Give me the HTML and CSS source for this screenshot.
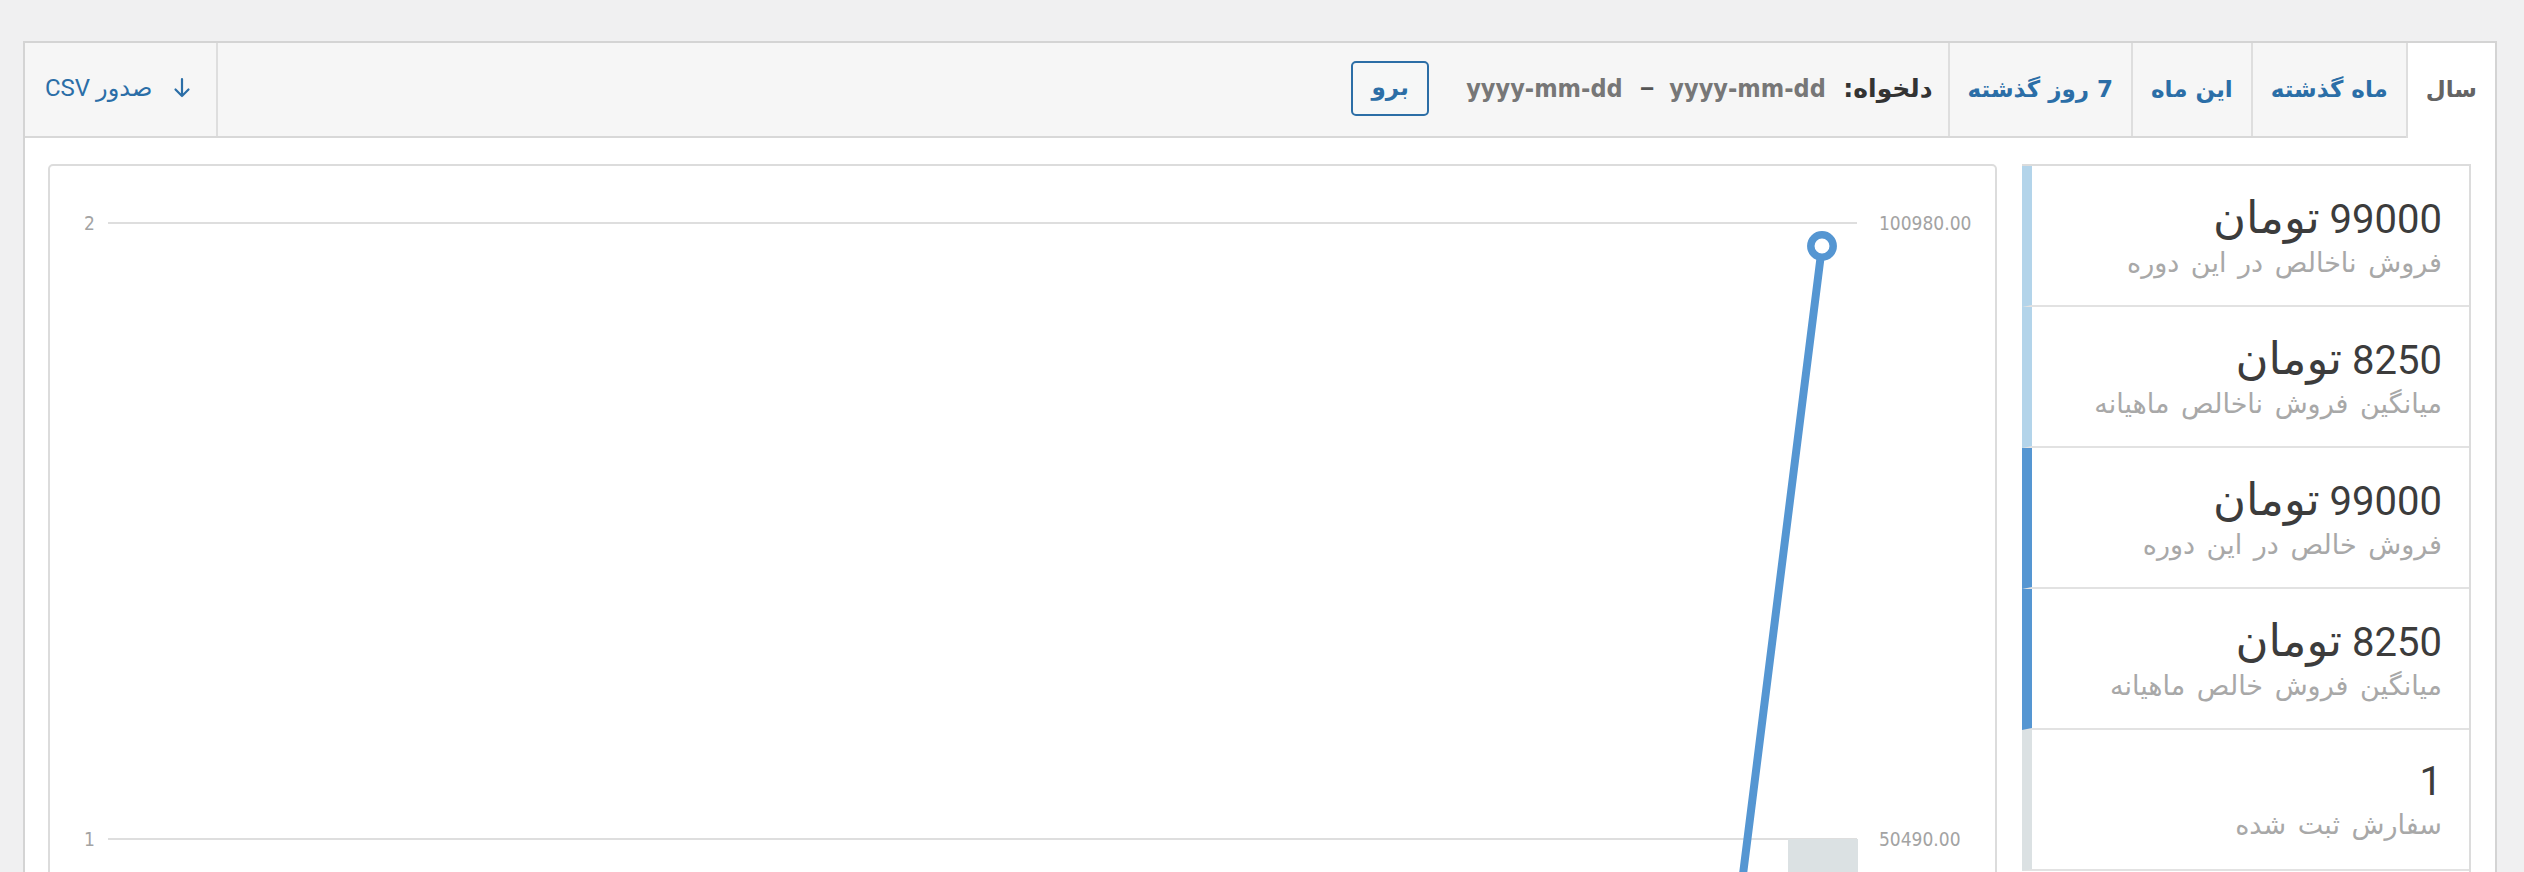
FILE: index.html
```html
<!DOCTYPE html>
<html dir="rtl" lang="fa">
<head>
<meta charset="utf-8">
<title>گزارش فروش</title>
<link rel="stylesheet" href="styles.css">
</head>
<body>
<div class="report">
  <div class="range-bar">
    <ul class="tabs">
      <li class="active">سال</li>
      <li><a href="#">ماه گذشته</a></li>
      <li><a href="#">این ماه</a></li>
      <li><a href="#">7 روز گذشته</a></li>
      <li class="custom">
        <span class="custom-label">دلخواه:</span>
        <form class="range-form">
          <input type="text" class="date" placeholder="yyyy-mm-dd">
          <span class="dash">–</span>
          <input type="text" class="date" placeholder="yyyy-mm-dd">
          <button type="button" class="go">برو</button>
        </form>
      </li>
    </ul>
    <div class="export">
      <a href="#" class="export-link">
        <svg class="arrow" width="18" height="22" viewBox="0 0 18 22"><path d="M9 2 V19 M2.5 12.5 L9 19 L15.5 12.5" fill="none" stroke="currentColor" stroke-width="2.2" stroke-linecap="round" stroke-linejoin="round"/></svg>
        <span>صدور CSV</span>
      </a>
    </div>
  </div>
  <div class="main">
    <ul class="legend">
      <li class="s-light"><strong>99000 <span class="unit">تومان</span></strong><span class="label">فروش ناخالص در این دوره</span></li>
      <li class="s-light"><strong>8250 <span class="unit">تومان</span></strong><span class="label">میانگین فروش ناخالص ماهیانه</span></li>
      <li class="s-blue"><strong>99000 <span class="unit">تومان</span></strong><span class="label">فروش خالص در این دوره</span></li>
      <li class="s-blue"><strong>8250 <span class="unit">تومان</span></strong><span class="label">میانگین فروش خالص ماهیانه</span></li>
      <li class="s-grey"><strong>1</strong><span class="label">سفارش ثبت شده</span></li>
    </ul>
    <div class="chart">
      <svg class="plot" width="1945" height="1300" viewBox="0 0 1945 1300">
        <line class="grid" x1="58" y1="57" x2="1807" y2="57"/>
        <line class="grid" x1="58" y1="673" x2="1807" y2="673"/>
        <text class="axis" x="34" y="57" text-anchor="end" dominant-baseline="central">2</text>
        <text class="axis" x="34" y="673" text-anchor="end" dominant-baseline="central">1</text>
        <text class="axis" x="1829" y="57" text-anchor="start" dominant-baseline="central" direction="ltr">100980.00</text>
        <text class="axis" x="1829" y="673" text-anchor="start" dominant-baseline="central" direction="ltr">50490.00</text>
        <rect class="bar" x="1738" y="673" width="70" height="620"/>
        <line class="series" x1="1772" y1="80" x2="1620" y2="1289"/>
        <circle class="point" cx="1772" cy="80" r="11.2"/>
      </svg>
    </div>
  </div>
</div>
</body>
</html>
```
FILE: styles.css
```css
html, body {
  margin: 0;
  padding: 0;
}
body {
  background: #f0f0f1;
  height: 872px;
  overflow: hidden;
  font-family: Roboto, "DejaVu Sans", sans-serif;
}
.report {
  margin: 41px 27px 0 23px;
  border: 2px solid #d4d4d4;
  border-bottom: none;
  background: #fff;
}
.range-bar {
  display: flex;
  height: 93px;
  background: #f6f6f6;
  border-bottom: 2px solid #d8d8d8;
}
.tabs {
  display: flex;
  list-style: none;
  margin: 0;
  padding: 0;
}
.tabs li {
  display: flex;
  align-items: center;
  padding: 0 18px 2px;
  border-left: 2px solid #dedede;
  font-family: "DejaVu Sans", sans-serif;
  font-weight: bold;
  font-size: 23px;
  color: #2b6ea7;
}
.tabs li a {
  color: #2b6ea7;
  text-decoration: none;
}
.tabs li.active {
  background: #fff;
  color: #646464;
  margin-bottom: -2px;
  padding-bottom: 4px;
}
.tabs li.custom {
  border-left: none;
  padding-right: 15px;
  padding-left: 0;
  color: #333;
  gap: 16px;
}
.custom-label {
  font-size: 25px;
}
.range-form {
  display: flex;
  align-items: center;
  gap: 15px;
  margin: 0;
}
.date {
  width: 158px;
  border: none;
  background: transparent;
  padding: 0;
  margin: 0;
  direction: ltr;
  text-align: left;
  font-family: "DejaVu Sans Condensed", "DejaVu Sans", sans-serif;
  font-weight: bold;
  font-size: 25px;
  color: #777;
  outline: none;
}
.date::placeholder {
  color: #777;
  opacity: 1;
}
.dash {
  color: #555;
  font-family: Roboto, sans-serif;
  font-weight: bold;
  font-size: 24px;
}
.go {
  margin-right: 22px;
  width: 78px;
  height: 55px;
  box-sizing: border-box;
  border: 2px solid #2c6ea6;
  border-radius: 5px;
  background: #f6f7f7;
  color: #2c6ea6;
  font-family: "DejaVu Sans", sans-serif;
  font-weight: bold;
  font-size: 23px;
  padding: 0 0 4px;
}
.export {
  margin-right: auto;
  display: flex;
  align-items: center;
  padding: 0 25px 4px 20px;
  border-right: 2px solid #dedede;
}
.export-link {
  display: flex;
  align-items: center;
  gap: 21px;
  color: #2b6ea7;
  text-decoration: none;
  font-size: 24px;
}
.arrow {
  display: block;
}
.main {
  display: flex;
  gap: 25px;
  padding: 26px 24px 0 23px;
}
.legend {
  list-style: none;
  margin: 0;
  padding: 0;
  width: 449px;
  flex: none;
  box-sizing: border-box;
  border-top: 2px solid #dcdcdc;
  border-right: 2px solid #dcdcdc;
}
.legend li {
  height: 141px;
  box-sizing: border-box;
  padding: 28px 27px 0 0;
  border-bottom: 2px solid #e2e2e2;
  border-left: 10px solid #b3d4ea;
}
.legend li.s-blue {
  border-left-color: #5596d2;
}
.legend li.s-grey {
  border-left-color: #dbe1e3;
}
.legend strong {
  display: block;
  font-weight: normal;
  font-size: 40px;
  line-height: 48px;
  color: #3c3c3c;
}
.legend .unit {
  font-family: "DejaVu Sans", sans-serif;
  font-size: 45px;
}
.legend .label {
  display: block;
  font-family: "DejaVu Sans", sans-serif;
  font-size: 27px;
  word-spacing: 3px;
  line-height: 38px;
  color: #a8a8a8;
}
.chart {
  flex: 1;
  height: 1400px;
  border: 2px solid #dcdcdc;
  border-radius: 5px;
  overflow: hidden;
}
.plot {
  display: block;
}
.grid {
  stroke: #dedede;
  stroke-width: 2;
}
.axis {
  font-family: "DejaVu Sans Condensed", "DejaVu Sans", sans-serif;
  font-size: 19px;
  fill: #a3a3a3;
}
.bar {
  fill: #dbe1e3;
}
.series {
  stroke: #5596d2;
  stroke-width: 8;
  stroke-linecap: round;
}
.point {
  fill: #fff;
  stroke: #5596d2;
  stroke-width: 7.5;
}
```
